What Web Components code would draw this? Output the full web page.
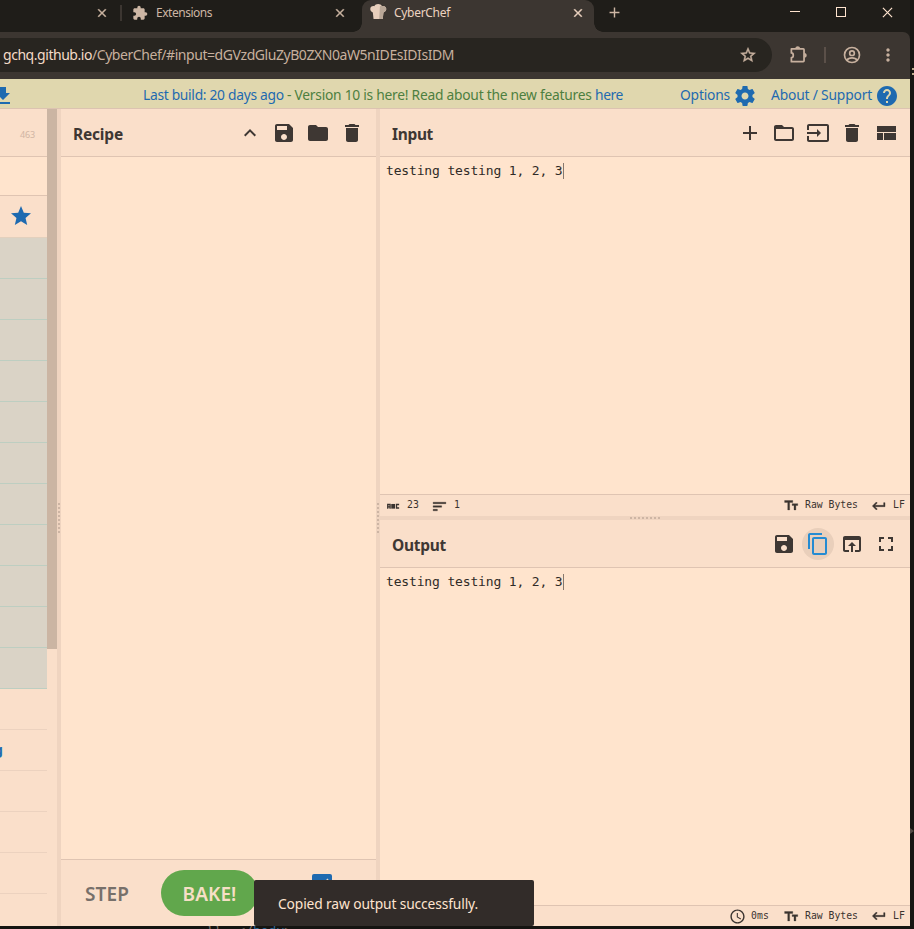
<!DOCTYPE html>
<html lang="en">
<head>
<meta charset="utf-8">
<title>CyberChef</title>
<style>
body{margin:0;width:914px;height:929px;overflow:hidden;background:#171613;font-family:"Noto Sans","Open Sans",sans-serif}
</style>
</head>
<body>
<chef-desktop></chef-desktop>
<script>
const ICONS = {
  puzzle:'<path d="M20.500 11H19V7c0-1.100-.9-2-2-2h-4V3.500a2.500 2.500 0 0 0-5 0V5H4c-1.100 0-2 .9-2 2v3.800h1.500a2.700 2.700 0 0 1 0 5.400H2V20c0 1.100.9 2 2 2h3.800v-1.500a2.700 2.700 0 0 1 5.400 0V22H17c1.100 0 2-.9 2-2v-4h1.500a2.500 2.500 0 0 0 0-5z"/>',
  extension:'<path fill="none" stroke="currentColor" stroke-width="2.200" stroke-linejoin="round" d="M3 5h15q1 0 1 1v14q0 1-1 1H3v-5c3.200 0 3.200-6 0-6z"/><path d="M8 4.500c0-3.800 6-3.800 6 0zM19.500 10c3.800 0 3.800 6 0 6z"/>',
  close:'<path d="M19 6.410L17.590 5 12 10.590 6.410 5 5 6.410 10.590 12 5 17.590 6.410 19 12 13.410 17.590 19 19 17.590 13.410 12z" stroke="currentColor" stroke-width=".7"/>',
  thinclose:'<path fill="none" stroke="currentColor" stroke-width="2.600" d="M2 2L22 22M22 2L2 22"/>',
  plus:'<path d="M19 13h-6v6h-2v-6H5v-2h6V5h2v6h6v2z"/>',
  star:'<path d="M12 17.270L18.180 21l-1.640-7.030L22 9.240l-7.190-.61L12 2 9.190 8.630 2 9.240l5.460 4.730L5.820 21z"/>',
  staro:'<path d="M22 9.240l-7.190-.62L12 2 9.190 8.630 2 9.240l5.460 4.730L5.820 21 12 17.270 18.180 21l-1.630-7.030L22 9.240zM12 15.400l-3.760 2.270 1-4.280-3.320-2.880 4.380-.38L12 6.100l1.710 4.040 4.380.38-3.320 2.880 1 4.280L12 15.400z" stroke="currentColor" stroke-width=".6"/>',
  account:'<g fill="none" stroke="currentColor" stroke-width="2"><circle cx="12" cy="12" r="9"/><circle cx="12" cy="9.800" r="2.800"/><path d="M5.500 18.500c3-4 10-4 13 0"/></g>',
  more:'<path d="M12 8c1.100 0 2-.9 2-2s-.9-2-2-2-2 .9-2 2 .9 2 2 2zm0 2c-1.100 0-2 .9-2 2s.9 2 2 2 2-.9 2-2-.9-2-2-2zm0 6c-1.100 0-2 .9-2 2s.9 2 2 2 2-.9 2-2-.9-2-2-2z"/>',
  download:'<path d="M19 9h-4V3H9v6H5l7 7 7-7zM5 18v2h14v-2H5z"/>',
  gear:'<path d="M19.430 12.980c.04-.32.07-.64.07-.98s-.03-.66-.07-.98l2.110-1.650c.19-.15.24-.42.12-.64l-2-3.460c-.12-.22-.39-.3-.61-.22l-2.490 1c-.52-.4-1.080-.73-1.690-.98l-.38-2.650C14.460 2.180 14.250 2 14 2h-4c-.25 0-.46.18-.49.42l-.38 2.650c-.61.25-1.170.59-1.690.98l-2.490-1c-.23-.09-.49 0-.61.22l-2 3.460c-.13.22-.07.49.12.64l2.110 1.650c-.04.32-.07.65-.07.98s.03.66.07.98l-2.110 1.650c-.19.15-.24.42-.12.64l2 3.460c.12.22.39.3.61.22l2.490-1c.52.4 1.080.73 1.690.98l.38 2.650c.03.24.24.42.49.42h4c.25 0 .46-.18.49-.42l.38-2.650c.61-.25 1.170-.59 1.690-.98l2.490 1c.23.09.49 0 .61-.22l2-3.460c.12-.22.07-.49-.12-.64l-2.110-1.650zM12 15.500c-1.930 0-3.500-1.570-3.500-3.500s1.570-3.500 3.500-3.500 3.500 1.570 3.500 3.500-1.570 3.500-3.500 3.500z"/>',
  help:'<path d="M12 2C6.480 2 2 6.480 2 12s4.480 10 10 10 10-4.480 10-10S17.520 2 12 2zm1 17h-2v-2h2v2zm2.070-7.750l-.9.920C13.450 12.900 13 13.500 13 15h-2v-.5c0-1.100.45-2.100 1.170-2.830l1.240-1.260c.37-.36.59-.86.59-1.410 0-1.100-.9-2-2-2s-2 .9-2 2H8c0-2.210 1.790-4 4-4s4 1.790 4 4c0 .88-.36 1.680-.93 2.250z"/>',
  up:'<path d="M12 8l-6 6 1.410 1.410L12 10.830l4.590 4.580L18 14z"/>',
  save:'<path d="M17 3H5c-1.110 0-2 .9-2 2v14c0 1.100.89 2 2 2h14c1.100 0 2-.9 2-2V7l-4-4zm-5 16c-1.660 0-3-1.340-3-3s1.340-3 3-3 3 1.340 3 3-1.340 3-3 3zm3-10H5V5h10v4z"/>',
  folder:'<path d="M10 4H4c-1.100 0-1.990.9-1.990 2L2 18c0 1.100.9 2 2 2h16c1.100 0 2-.9 2-2V8c0-1.100-.9-2-2-2h-8l-2-2z"/>',
  foldero:'<path d="M20 6h-8l-2-2H4c-1.100 0-1.990.9-1.990 2L2 18c0 1.100.9 2 2 2h16c1.100 0 2-.9 2-2V8c0-1.100-.9-2-2-2zm0 12H4V8h16v10z"/>',
  trash:'<path d="M6 19c0 1.100.9 2 2 2h8c1.100 0 2-.9 2-2V7H6v12zM19 4h-3.500l-1-1h-5l-1 1H5v2h14V4z"/>',
  input:'<path d="M21 3.010H3c-1.100 0-2 .9-2 2V9h2V4.990h18v14.030H3V15H1v4.010c0 1.100.9 1.980 2 1.980h18c1.100 0 2-.88 2-1.980v-14c0-1.110-.9-2-2-2zM11 16l4-4-4-4v3H1v2h10v3z"/>',
  quilt:'<path d="M3 5h19v6H3zM3 12h6v7H3zM10 12h12v7H10z"/>',
  copy:'<path d="M16 1H4c-1.100 0-2 .9-2 2v14h2V3h12V1zm3 4H8c-1.100 0-2 .9-2 2v14c0 1.100.9 2 2 2h11c1.100 0 2-.9 2-2V7c0-1.100-.9-2-2-2zm0 16H8V7h11v14z"/>',
  open:'<path d="M19 4H5c-1.110 0-2 .9-2 2v12c0 1.100.89 2 2 2h4v-2H5V8h14v10h-4v2h4c1.100 0 2-.9 2-2V6c0-1.100-.89-2-2-2zm-7 6l-4 4h3v6h2v-6h3l-4-4z"/>',
  full:'<path d="M7 14H5v5h5v-2H7v-3zm-2-4h2V7h3V5H5v5zm12 7h-3v2h5v-5h-2v3zM14 5v2h3v3h2V5h-5z"/>',
  abc:'<g fill="none" stroke="currentColor" stroke-width="2.300"><path d="M3 16.500V9.500h4v7M3 13.500h4"/><path d="M17 9.500h5.500M22.500 9.500H18v6h4.500"/></g><path d="M9 8.500h6.500v8H9z"/>',
  sort:'<path d="M3 18h6v-2H3v2zM3 6v2h18V6H3zm0 7h12v-2H3v2z" stroke="currentColor" stroke-width=".5"/>',
  size:'<path d="M1 4v3h5v12h3V7h5V4H1zm21 5h-9v3h3v7h3v-7h3V9z" stroke="currentColor" stroke-width=".5"/>',
  ret:'<path d="M19 7v4H5.830l3.580-3.590L8 6l-6 6 6 6 1.410-1.410L5.830 13H21V7z" stroke="currentColor" stroke-width=".6"/>',
  clock:'<path d="M11.990 2C6.470 2 2 6.480 2 12s4.470 10 9.990 10C17.520 22 22 17.520 22 12S17.520 2 11.990 2zM12 20c-4.420 0-8-3.580-8-8s3.580-8 8-8 8 3.580 8 8-3.580 8-8 8zm.5-13H11v6l5.250 3.150.75-1.230-4.500-2.670z"/>',
  chef:'<path fill="#e8cfbc" d="M4 12C-2 9 0 2 6 3c2-4 9-4 11 0 7-1 8 7 2 9l-1 9H5z"/><path fill="#b9a797" d="M14 3q2-1 3 0c7-1 8 7 2 9l-1 9h-5z"/>'
};
function define(name, html, after) {
  const t = document.createElement('template');
  t.innerHTML = html;
  customElements.define(name, class extends HTMLElement {
    connectedCallback() {
      if (this.shadowRoot) return;
      this.attachShadow({mode:'open'}).append(t.content.cloneNode(true));
      if (after) after.call(this, this.shadowRoot);
    }
  });
}

/* <ui-icon name size> draws one glyph of the icon set */
define('ui-icon', `<style>:host{display:block;flex:none}svg{display:block;fill:currentColor}</style><svg viewBox="0 0 24 24"></svg>`, function(r){
  const s = r.querySelector('svg'), n = this.getAttribute('size') || 24;
  s.setAttribute('width', n); s.setAttribute('height', n);
  s.innerHTML = ICONS[this.getAttribute('name')];
});

/* <fit-text w> spreads its letters over a given width */
define('fit-text', `<style>:host{display:block;flex:none;white-space:pre}span{display:inline-block}</style><span><slot></slot></span>`, function(r){
  const w = +this.getAttribute('w'), s = r.querySelector('span');
  const now = s.getBoundingClientRect().width;
  s.style.letterSpacing = ((w - now) / this.textContent.length) + 'px';
  this.style.width = w + 'px';
});

define('tab-strip', `<style>
:host{display:flex;height:32px;background:#1f1d19;color:#cdb6a4;font-size:12px;line-height:26px;position:relative}
.t{display:flex;align-items:center;height:26px;box-sizing:border-box}
.a{width:122px;padding-left:95px}
.b{width:240px;gap:8px}
.sep{width:2px;height:16px;background:#3c3631}
.c{width:232px;height:32px;background:#3c3631;border-radius:9px 9px 0 0;padding:0 9px 6px 8px;gap:8px;color:#ecd3c0;position:relative}
.c::before,.c::after{content:"";position:absolute;bottom:0;width:9px;height:9px}
.c::before{left:-9px;background:radial-gradient(circle at 0 0,transparent 8.500px,#3c3631 9px)}
.c::after{right:-9px;background:radial-gradient(circle at 100% 0,transparent 8.500px,#3c3631 9px)}
.sp{flex:1}
.w{margin-left:auto;display:flex;align-items:center;gap:36px;height:24px;padding-right:17px;color:#ffe4cf}
.min{width:10px;height:1px;background:#ffe4cf;margin-bottom:1px}.max{width:8px;height:8px;border:1px solid #ffe4cf}
</style>
<div class="t a"><ui-icon name="close" size="14"></ui-icon></div>
<div class="t b"><span class="sep" style="margin-left:-2px"></span><ui-icon name="puzzle" size="16" style="margin-left:2px"></ui-icon><fit-text w="56">Extensions</fit-text><span class="sp"></span><ui-icon name="close" size="14" style="margin-right:15px"></ui-icon></div>
<div class="t c"><ui-icon name="chef" size="17" style="margin-bottom:2px"></ui-icon><fit-text w="56" style="margin-left:-1px">CyberChef</fit-text><span class="sp"></span><ui-icon name="close" size="14"></ui-icon></div>
<div class="t" style="height:25px;padding-left:12px"><ui-icon name="plus" size="17"></ui-icon></div>
<div class="w"><span class="min"></span><span class="max"></span><ui-icon name="thinclose" size="11"></ui-icon></div>`);

define('address-bar', `<style>
:host{display:flex;height:47px;background:#3c3631;color:#c7b09e;align-items:center;box-sizing:border-box;border-top-right-radius:7px;padding-bottom:1px;font-size:14px}
.o{width:772px;height:34px;background:#282520;border-radius:0 17px 17px 0;display:flex;align-items:center;box-sizing:border-box;padding:0 15px 0 3px;justify-content:space-between;margin-right:17px}
.u{display:flex;padding-bottom:1px}.h{color:#f4dbc8}.l{width:2px;height:16px;background:#5b5049;margin:0 16px 0 16px}
</style>
<div class="o"><span class="u"><fit-text w="89" class="h">gchq.github.io</fit-text><fit-text w="362">/CyberChef/#input=dGVzdGluZyB0ZXN0aW5nIDEsIDIsIDM</fit-text></span><ui-icon name="staro" size="18"></ui-icon></div>
<ui-icon name="extension" size="19" style="margin-bottom:2px"></ui-icon><span class="l"></span><ui-icon name="account" size="20"></ui-icon><ui-icon name="more" size="20" style="margin-left:16px"></ui-icon>`);

define('news-banner', `<style>
:host{display:flex;height:29px;background:#e0d7ae;border-bottom:1px solid #dcc3b1;color:#1e6ab0;font-size:13.800px;line-height:31px;overflow:hidden}
.d{width:144px;margin-left:-9px;height:30px;display:flex;align-items:center;box-sizing:border-box;padding-top:3px}
.m{display:flex;width:537px;margin-left:8px}.g{color:#4d7f40}
ui-icon{margin-top:5px}
</style>
<div class="d"><ui-icon name="download" style="margin:0"></ui-icon></div>
<div class="m"><fit-text w="144">Last build: 20 days ago </fit-text><fit-text w="308" class="g">- Version 10 is here! Read about the new features </fit-text><fit-text w="28">here</fit-text></div>
<fit-text w="50">Options</fit-text><ui-icon name="gear" style="margin-left:3px"></ui-icon><fit-text w="101" style="margin-left:14px">About / Support</fit-text><ui-icon name="help" style="margin-left:3px"></ui-icon>`);

define('pane-title', `<style>
:host{display:flex;flex:none;height:47px;background:#fadfca;border-bottom:1px solid #dfc4b2;color:#3e3733;align-items:center;padding:0 12px}
.n{font-size:15.500px;line-height:20px;font-weight:700;margin-right:auto;padding-top:3px}.i{display:flex;gap:10px;padding-top:1px}
</style><span class="n"><slot name="title"></slot></span><span class="i"><slot></slot></span>`);

define('status-bar', `<style>
:host{display:flex;height:21px;flex:none;background:#fadfca;border-top:1px solid #dfc4b2;color:#3a332f;font:9.800px/12px "DejaVu Sans Mono",monospace;align-items:center;padding:0 5px}
fit-text{margin-bottom:1px}
</style><slot></slot>`);

define('text-pane', `<style>
:host{display:block;flex:1;min-height:0;background:#ffe4cd;color:#302b27;font:13px/16px "DejaVu Sans Mono",monospace;padding:6px 6px 4px}
div{display:flex}i{width:1px;height:16px;background:#87786d}
</style><div><fit-text w="176.500">testing testing 1, 2, 3</fit-text><i></i></div>`);

define('split-bar', `<style>
:host{display:flex;flex:none;background:#efd4c0;align-items:center;justify-content:center;width:4px}
:host([row]){width:auto;height:4px}
i{width:2px;height:30px;background:repeating-linear-gradient(#cdb5a4 0 2px,transparent 2px 4px)}
:host([row]) i{height:2px;width:30px;background:repeating-linear-gradient(90deg,#cdb5a4 0 2px,transparent 2px 4px)}
</style><i></i>`);

define('operations-list', `<style>
:host{display:flex;width:57px;flex:none;background:#fadfca}
.l{width:47px}.l>div{box-sizing:border-box}
.h{height:48px;border-bottom:1px solid #dfc4b2;font-size:9px;color:#d0b5a4;padding:19px 0 0 20px;line-height:14px}
.s{height:39px;border-bottom:1px solid #dfc4b2;background:#ffe4cd}
.f{height:42px;padding:8px 0 0 9px;color:#1e6ab0;border-bottom:1px solid #e3d0bd}
.o{height:41px;background:#dad3c6;border-bottom:1px solid #bdcec1}
.c{height:41px;border-bottom:1px solid #ecd2bf;color:#1e6ab0;font:700 14px/40px "Noto Sans",sans-serif;overflow:hidden}
.c span{display:block;margin-left:-6px}
.b{width:10px;height:540px;background:#cbb5a3}
</style>
<div class="l"><div class="h"><fit-text w="15">463</fit-text></div><div class="s"></div><div class="f"><ui-icon name="star"></ui-icon></div>
${'<div class="o"></div>'.repeat(11)}<div class="c"></div><div class="c"><span>g</span></div>${'<div class="c"></div>'.repeat(3)}</div><div class="b"></div>`);

define('recipe-pane', `<style>
:host{display:flex;flex-direction:column;width:315px;flex:none;background:#ffe4cd}
.f{flex:1}.c{display:flex;height:66px;background:#fadfca;border-top:1px solid #dfc4b2;align-items:center;font-size:19px;line-height:24px;font-weight:600}
.s{color:#77706a;margin-left:24px;padding-top:2px}.b{width:97px;height:46px;border-radius:23px;background:#61a74c;color:#f6dfc5;display:flex;align-items:center;justify-content:center;margin-left:32px}
.b fit-text{padding-top:2px}
.k{width:20px;height:20px;border-radius:2px;background:#1e6ab0;margin-left:54px;align-self:flex-start;margin-top:14px;color:#e9d2c0}
</style>
<pane-title><fit-text slot="title" w="50">Recipe</fit-text><ui-icon name="up"></ui-icon><ui-icon name="save"></ui-icon><ui-icon name="folder"></ui-icon><ui-icon name="trash"></ui-icon></pane-title>
<div class="f"></div><div class="c"><fit-text w="44" class="s">STEP</fit-text><div class="b"><fit-text w="54">BAKE!</fit-text></div><div class="k"><svg width="20" height="20"><path d="M4 10l4 4 8-9" fill="none" stroke="currentColor" stroke-width="1.500"/></svg></div></div>`);

define('io-panes', `<style>
:host{display:flex;flex-direction:column;flex:1;min-width:0}
.g{margin-left:auto}
status-bar fit-text{margin-bottom:1px}
.cp{color:#258bd2;box-shadow:0 0 0 4px #e9cfbb;background:#e9cfbb;border-radius:50%}
</style>
<pane-title><fit-text slot="title" w="41">Input</fit-text><ui-icon name="plus"></ui-icon><ui-icon name="foldero"></ui-icon><ui-icon name="input"></ui-icon><ui-icon name="trash"></ui-icon><ui-icon name="quilt"></ui-icon></pane-title>
<text-pane></text-pane>
<status-bar><ui-icon name="abc" size="14" style="margin-left:1px"></ui-icon><fit-text w="12" style="margin-left:7px">23</fit-text><ui-icon name="sort" size="17" style="margin:2px 0 0 12px"></ui-icon><fit-text w="6" style="margin-left:6px">1</fit-text>
<ui-icon class="g" name="size" size="15"></ui-icon><fit-text w="53" style="margin-left:6px">Raw Bytes</fit-text><ui-icon name="ret" size="16" style="margin:1px 0 0 13px"></ui-icon><fit-text w="12" style="margin-left:6px">LF</fit-text></status-bar>
<split-bar row></split-bar>
<pane-title><fit-text slot="title" w="54">Output</fit-text><ui-icon name="save"></ui-icon><ui-icon name="copy" class="cp"></ui-icon><ui-icon name="open"></ui-icon><ui-icon name="full"></ui-icon></pane-title>
<text-pane></text-pane>
<status-bar style="height:20px"><ui-icon class="g" name="clock" size="17"></ui-icon><fit-text w="18" style="margin-left:5px">0ms</fit-text><ui-icon name="size" size="15" style="margin-left:15px"></ui-icon><fit-text w="53" style="margin-left:6px">Raw Bytes</fit-text><ui-icon name="ret" size="16" style="margin:0 0 0 13px"></ui-icon><fit-text w="12" style="margin-left:6px">LF</fit-text></status-bar>`);

define('snack-bar', `<style>
:host{display:flex;position:absolute;left:254px;top:880px;width:280px;height:46px;box-sizing:border-box;background:#322c29;color:#ffe4cf;border-radius:2px;align-items:center;padding:1px 24px 0;font-size:13.800px}
</style><slot></slot>`);

/* strip of the editor window that shows behind the browser */
define('editor-behind', `<style>
:host{position:absolute;left:0;top:926px;width:914px;height:3px;overflow:hidden;background:#151411;color:#857970;font:13px/14px "DejaVu Sans Mono",monospace}
div{display:flex;margin:-2px 0 0 206px;white-space:pre}b{font-weight:400;color:#2b6598}
</style><div>}}  &lt;/<b>body</b>&gt;</div>`);
define('edge-marks', `<style>
:host{position:absolute;left:910px;top:35px;width:4px;height:800px;overflow:hidden;color:#877b70}
i{display:block;width:2px;height:2px;background:#b9a98a;margin-left:2px}
</style><i style="margin-top:33px"></i><i style="margin-top:3px"></i><svg width="4" height="6" style="display:block;margin-top:753px"><path d="M0 0l4 3-4 3z" fill="#554d47"/></svg>`);

define('chef-desktop', `<style>
:host{display:block;position:relative;width:914px;height:929px;overflow:hidden}
.w{width:910px;height:926px;display:flex;flex-direction:column;background:#1f1d19}
.m{display:flex;flex:1;min-height:0;background:#fadfca}
</style>
<div class="w"><tab-strip></tab-strip><address-bar></address-bar><news-banner></news-banner>
<div class="m"><operations-list></operations-list><split-bar></split-bar><recipe-pane></recipe-pane><split-bar></split-bar><io-panes></io-panes></div></div>
<editor-behind></editor-behind><edge-marks></edge-marks>
<snack-bar><fit-text w="200">Copied raw output successfully.</fit-text></snack-bar>`);
</script>
</body>
</html>
